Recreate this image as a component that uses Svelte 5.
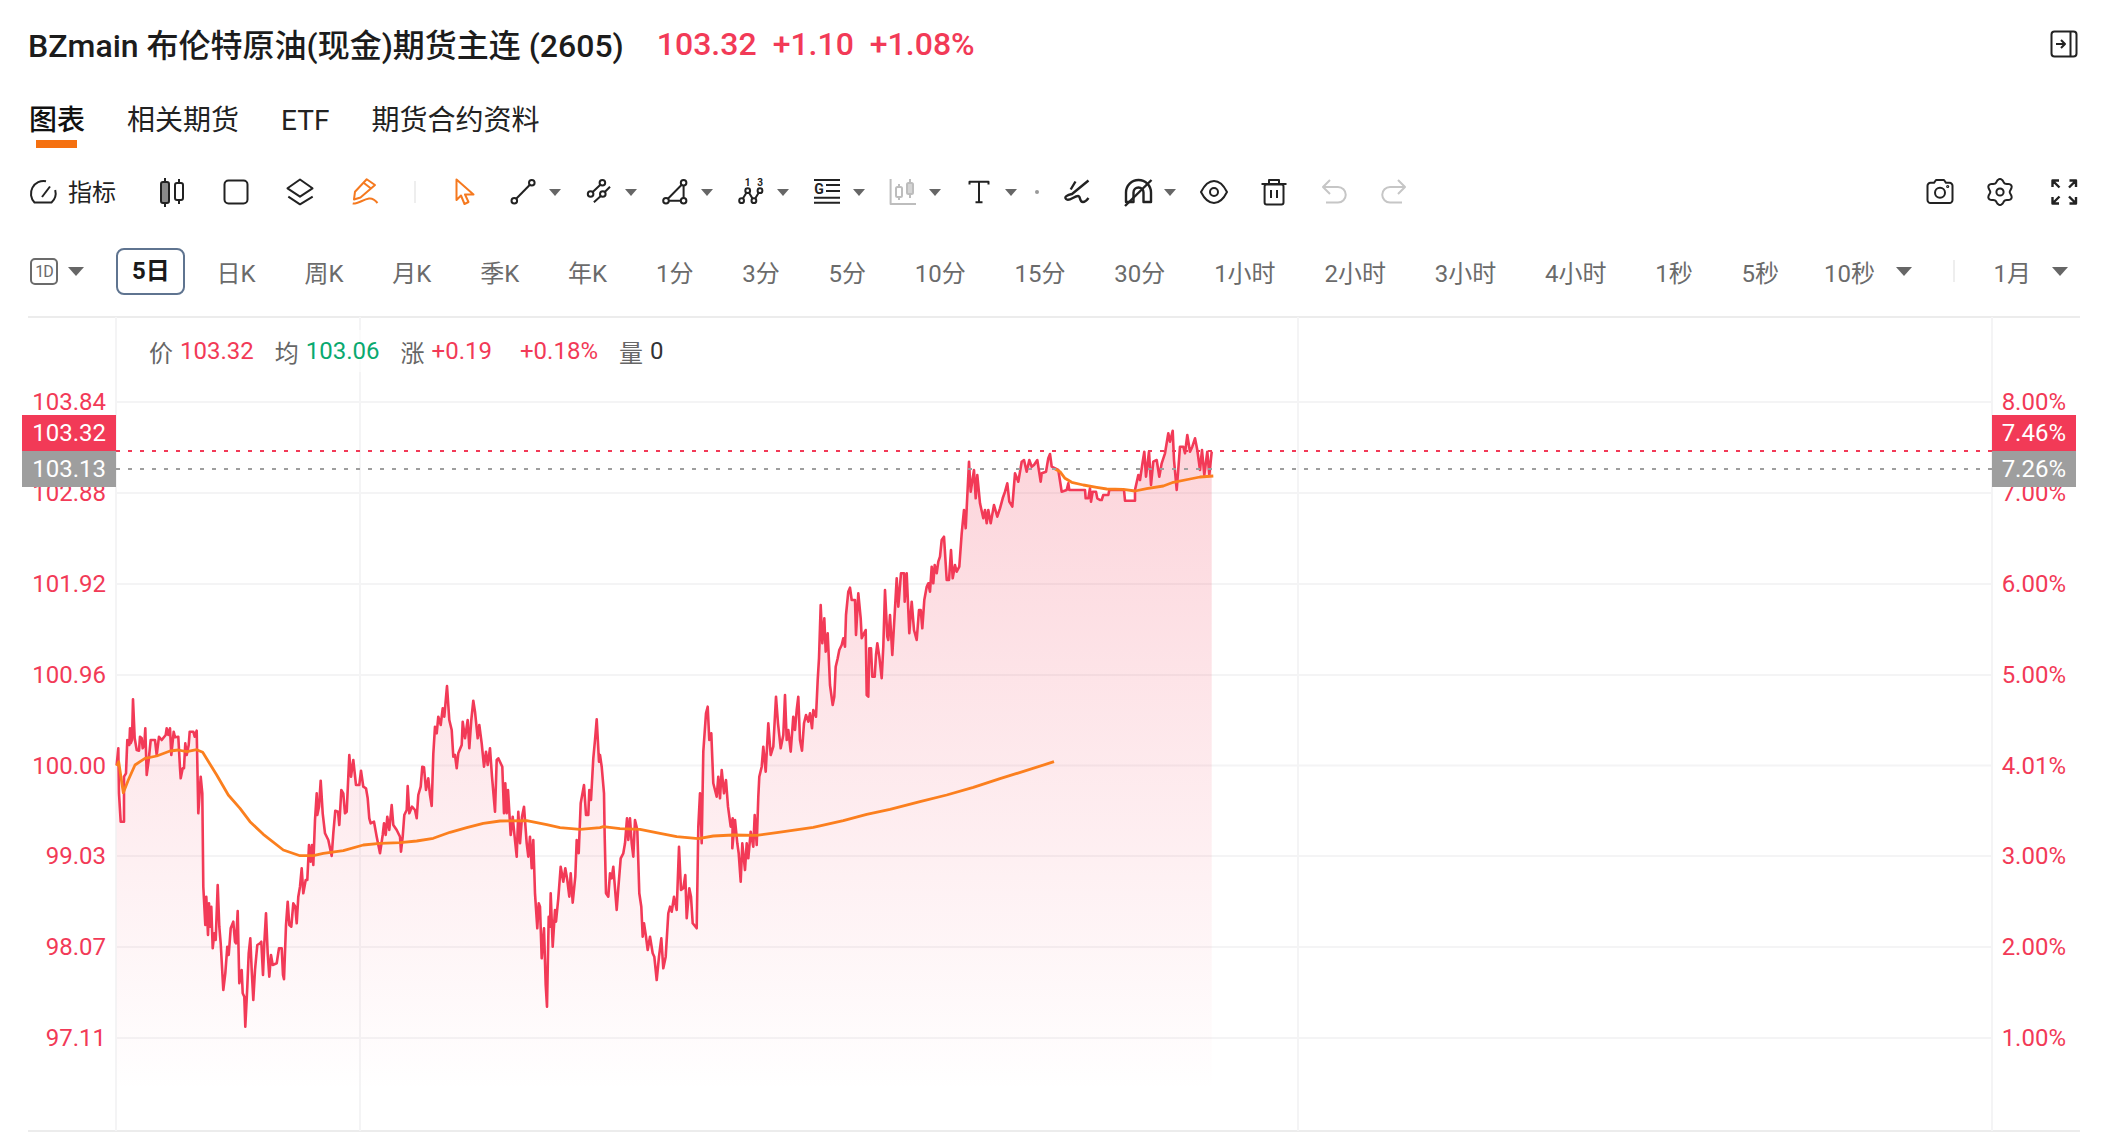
<script>
  // traced price points, grouped by the crop they were read from
  const seg1 = [[50,255],[55,205],[57,340],[62,425],[72,425],[72,290],[78,280],[82,180],[88,195],[90,145],[92,190],[96,180],[99,58],[104,175],[110,210],[117,212],[120,170],[125,175],[128,205],[133,195],[136,145],[140,285],[146,240],[152,180],[165,180],[170,225],[177,170],[185,180],[197,165],[200,145],[205,165],[210,145],[214,225],[221,155],[225,172],[235,170],[240,265],[242,295],[248,265],[252,265],[256,190],[260,225],[266,195],[269,155],[280,155],[284,170],[290,152],[295,400],[302,290],[307,340],[310,620],[316,735],[319,650],[324,765],[327,670],[330,740],[334,680],[338,805],[343,760],[347,780],[353,615],[358,740],[362,790],[370,930],[376,880],[382,800],[386,825],[392,745],[400,725],[405,785],[408,790],[413,693],[418,910],[425,870],[428,940],[433,950],[436,1040],[442,920],[446,820],[451,775],[455,870],[460,960],[465,870],[472,795],[480,790],[484,785],[489,885],[493,790],[498,700],[503,820],[508,890],[513,825],[518,855],[530,850],[537,805],[545,805],[549,885],[552,898],[558,735],[563,665],[568,735],[574,740],[580,670],[586,680],[590,730],[595,650],[600,620],[605,565],[610,640],[617,600],[622,600],[627,495],[632,545],[636,495],[640,555],[645,420],[650,340],[652,405],[657,380],[662,302],[668,400],[675,460],[685,480],[695,528],[700,460],[706,392],[714,395],[718,435],[724,330],[730,340],[735,400],[740,395],[748,225],[753,290],[760,240],[768,315],[778,315],[783,272],[790,320],[798,325],[803,355],[808,415],[812,430],[822,425],[830,470],[840,520],[848,465],[852,430],[857,465],[862,410],[868,450],[875,375],[880,435],[890,450],[900,470],[903,515],[908,470],[913,405],[920,390],[923,318],[928,400],[936,380],[945,390],[950,415],[955,345],[962,320],[967,260],[972,262],[978,330],[985,295],[990,345],[995,378],[1000,222],[1005,140],[1010,160],[1015,110],[1022,135],[1028,85],[1033,110],[1041,18],[1048,120],[1055,150],[1060,230],[1065,225],[1070,265],[1075,220],[1085,195],[1088,125],[1095,175],[1103,120],[1108,205],[1114,120],[1120,62],[1125,95],[1133,175],[1138,135],[1145,190],[1152,260],[1158,215],[1163,255],[1170,205],[1176,290],[1185,395],[1190,240],[1195,235],[1207,260],[1212,400],[1216,310],[1220,400],[1224,330],[1232,465],[1238,410],[1243,460],[1250,530],[1255,395],[1260,490],[1266,410],[1272,380],[1280,490],[1285,530],[1290,470],[1295,565],[1300,480],[1305,640],[1312,745],[1316,670],[1320,680],[1325,835],[1332,745],[1337,915],[1341,980],[1346,710],[1350,740],[1352,640],[1358,800],[1365,690],[1368,725],[1375,655],[1382,560],[1390,605],[1396,565],[1402,600],[1408,650],[1412,580],[1418,668],[1426,590],[1430,480],[1436,520],[1442,370],[1452,315],[1458,405],[1465,405],[1468,330],[1473,360],[1480,235],[1485,180],[1490,118],[1497,245]];
  const seg2 = [[300,225],[305,260],[312,340],[314,470],[318,640],[325,650],[330,580],[335,595],[340,560],[345,625],[350,690],[355,625],[362,535],[370,520],[375,490],[381,415],[385,480],[390,415],[395,490],[400,530],[405,420],[412,450],[418,640],[424,680],[428,770],[432,730],[438,770],[443,810],[450,770],[458,820],[463,830],[470,900],[477,830],[484,775],[490,865],[497,830],[505,700],[510,680],[515,695],[522,650],[530,690],[537,500],[543,630],[550,625],[556,585],[560,715],[568,625],[573,650],[578,730],[590,745],[595,440],[600,340],[605,490],[610,215],[618,100],[623,80],[628,180],[634,160],[640,310],[650,350],[655,290],[660,355],[665,270],[672,340],[678,300],[684,380],[692,440],[698,415],[697,505],[705,420],[712,490],[716,520],[722,605],[727,490],[735,570],[740,490],[745,535],[752,455],[760,500],[764,405],[770,495],[775,350],[778,290],[785,260],[790,200],[797,275],[805,130],[812,225],[820,200],[828,50],[834,130],[842,205],[850,165],[855,45],[860,180],[865,150],[872,215],[880,110],[885,150],[890,90],[895,50],[900,180],[906,212],[912,130],[918,105],[925,125],[930,100],[936,145],[940,90],[948,110]];
  const seg3 = [[53,720],[57,655],[62,495],[67,610],[73,535],[77,635],[83,580],[90,735],[98,795],[103,770],[107,680],[113,655],[118,630],[125,615],[130,595],[135,620],[138,525],[145,455],[150,443],[155,480],[165,480],[168,585],[175,460],[182,535],[185,595],[192,580],[197,570],[200,765],[205,770],[208,625],[213,625],[217,710],[224,710],[228,645],[232,610],[238,650],[245,715],[250,620],[255,450],[262,590],[265,600],[270,525],[277,645],[285,505],[290,415],[295,500],[303,400],[312,400],[314,485],[320,400],[328,580],[335,485],[342,570],[350,600],[357,510],[362,510],[367,565],[373,480],[380,440],[385,430],[390,455],[395,380],[400,430],[404,375],[410,400],[415,365],[420,350],[425,300],[432,290],[440,420],[447,420],[453,330],[458,415],[465,375],[470,395],[478,380],[485,280],[492,210],[497,265],[500,205],[507,65],[512,155],[522,90],[527,175],[532,105],[540,190],[550,235],[555,210],[560,250],[565,210],[572,250],[582,195],[592,230],[600,205],[608,175],[615,155],[622,130],[628,185],[637,200],[645,100],[655,125],[665,65],[672,60],[680,95],[688,60],[695,80],[702,75],[712,60],[722,125],[725,100],[738,95],[745,55],[750,42],[755,80],[775,90],[785,155],[800,150],[805,130],[808,150],[855,150],[857,175],[865,175],[870,145],[873,185],[878,155],[888,155],[892,175],[900,180],[905,180],[910,165],[925,165],[928,150],[972,150],[975,182],[1005,182]];
  const seg4 = [[555,240],[565,195],[570,210],[578,155],[583,125],[588,200],[597,125],[603,225],[610,155],[620,150],[628,200],[635,160],[645,130],[655,70],[660,95],[668,62],[672,150],[680,240],[690,110],[700,110],[705,130],[712,75],[720,125],[727,110],[735,85],[742,120],[750,180],[756,120],[763,195],[772,125],[778,195],[785,125]];

  const avg1 = [[50,258],[56,245],[70,338],[85,300],[105,255],[135,235],[170,228],[210,213],[235,210],[260,215],[290,209],[308,217],[350,285],[385,345],[420,385],[450,425],[490,463],[550,510],[600,527],[640,527],[670,520],[730,512],[790,495],[840,490],[900,488],[950,483],[1000,475],[1050,457],[1100,443],[1150,430],[1200,423],[1280,422],[1340,434],[1380,443],[1440,448],[1500,443]];
  const avg2 = [[310,440],[360,446],[420,448],[480,460],[530,470],[595,476],[640,468],[700,465],[770,466],[830,458],[940,442],[1030,422],[1100,403],[1170,388],[1260,365],[1340,345],[1420,322],[1500,296],[1662,245]];
  const avg3 = [[315,177],[330,185],[345,205],[365,217],[400,225],[440,232],[470,237],[520,238],[555,243],[590,236],[640,228],[670,217],[720,207],[750,201],[790,198]];

  const map = (pts, ox, oy) => pts.map(([x, y]) => [ox + x / 3, oy + y / 3]);
  const toD = (pts) => pts.map(([x, y], i) => (i ? "L" : "M") + x.toFixed(1) + " " + y.toFixed(1)).join("");

  const pricePts = [...map(seg1, 100, 680), ...map(seg2, 500, 680), ...map(seg3, 800, 440), ...map(seg4, 950, 410)];
  const priceLine = toD(pricePts);
  const priceArea = priceLine + "L" + pricePts[pricePts.length - 1][0].toFixed(1) + " 1092L116.7 1092Z";
  const avgA = toD([...map(avg1, 100, 680), ...map(avg2, 500, 680)]);
  const avgB = toD(map(avg3, 950, 410));

  const gridY = [402, 493, 584, 675, 765.5, 856, 947, 1038];
  const gridX = [116, 360, 1298, 1992];
  const leftLabels = ["103.84", "102.88", "101.92", "100.96", "100.00", "99.03", "98.07", "97.11"];
  const rightLabels = ["8.00%", "7.00%", "6.00%", "5.00%", "4.01%", "3.00%", "2.00%", "1.00%"];

  const periods = ["日K", "周K", "月K", "季K", "年K", "1分", "3分", "5分", "10分", "15分", "30分", "1小时", "2小时", "3小时", "4小时", "1秒", "5秒"];

  let gear = "";
  for (let i = 0; i <= 72; i++) {
    const t = (i / 72) * Math.PI * 2;
    const r = 11.4 + 1.7 * Math.cos(6 * t);
    gear += (i ? "L" : "M") + (14 + r * Math.sin(t)).toFixed(2) + " " + (14 - r * Math.cos(t)).toFixed(2);
  }
  gear += "Z";
</script>

<div class="page">
  <header class="head">
    <h1>BZmain 布伦特原油(现金)期货主连 (2605)</h1>
    <div class="quote">
      <span>103.32</span>
      <span>+1.10</span>
      <span>+1.08%</span>
    </div>
    <svg class="ico push" viewBox="0 0 28 28">
      <rect x="1.5" y="1.5" width="25" height="25" rx="3" />
      <path d="M20.5 2V26M6 14H15M11 10L15 14L11 18" />
    </svg>
  </header>

  <nav class="tabs">
    <span class="tab active">图表</span>
    <span class="tab">相关期货</span>
    <span class="tab">ETF</span>
    <span class="tab">期货合约资料</span>
  </nav>

  <div class="toolbar">
    <div class="indicator">
      <svg class="ico" viewBox="0 0 28 28">
        <path d="M17 3.2A12.7 12.7 0 0 0 5.5 24.5H22.5A12.7 12.7 0 0 0 26.2 12" />
        <path d="M13 19L21 8.5" />
      </svg>
      <span>指标</span>
    </div>

    <div class="left-tools">
      <svg class="ico" viewBox="0 0 28 28">
        <path d="M7 0V4M7 25V29M21 1V5M21 22V26" />
        <rect x="3" y="4" width="8" height="21" rx="2" class="dim" />
        <rect x="17" y="5" width="8" height="17" rx="2" />
      </svg>
      <svg class="ico" viewBox="0 0 28 28"><rect x="2.5" y="2.5" width="23" height="23" rx="4" /></svg>
      <svg class="ico" viewBox="0 0 28 28">
        <path d="M14 1.5L26.5 10.3L14 18.7L1.5 10.3Z" />
        <path d="M2.3 18.7L14 26.3L26.7 18.7" />
      </svg>
      <svg class="ico orange" viewBox="0 0 28 28">
        <path d="M16.7 1.3L25 7L10.5 19.5L4 21.5L5 13.7Z" />
        <path d="M13.3 4.5L21 10.5" />
        <path d="M2.7 25.5C7 26.5 13 21.5 19 20.5C22 20 25 22 27.5 25" />
      </svg>
      <span class="sep"></span>
    </div>

    <svg class="ico orange cursor" viewBox="0 0 28 28">
      <path d="M5.5 1.5V22L10 17.5L13.5 26L17.5 24L14 16.5H22.5Z" />
    </svg>

    <div class="draw-tools">
      <div class="tool">
        <svg class="ico" viewBox="0 0 28 28">
          <circle cx="5.3" cy="22.7" r="2.8" /><circle cx="22.8" cy="4.7" r="2.8" />
          <path d="M7.2 20.7L20.9 6.7" />
        </svg>
        <i class="caret"></i>
      </div>
      <div class="tool">
        <svg class="ico" viewBox="0 0 28 28">
          <circle cx="17.4" cy="4.7" r="2.8" /><circle cx="5.6" cy="16" r="2.8" /><circle cx="17.8" cy="16" r="2.8" />
          <path d="M7.7 14L15.4 6.7M8.9 24.3L15.8 18M19.8 14L25 8.7" />
        </svg>
        <i class="caret"></i>
      </div>
      <div class="tool">
        <svg class="ico" viewBox="0 0 28 28">
          <circle cx="22.6" cy="4.7" r="2.8" /><circle cx="5" cy="22.7" r="2.8" /><circle cx="22.6" cy="22.7" r="2.8" />
          <path d="M20.7 6.7L6.9 20.7M7.8 22.7H19.8M22.6 7.5V19.9" />
        </svg>
        <i class="caret"></i>
      </div>
      <div class="tool">
        <svg class="ico" viewBox="0 0 28 28">
          <text x="10.7" y="8" class="tiny">1</text>
          <text x="23" y="8" class="tiny">3</text>
          <circle cx="4.6" cy="22.7" r="2.4" /><circle cx="10.7" cy="12.7" r="2.4" /><circle cx="16.9" cy="22.7" r="2.4" /><circle cx="23" cy="12.7" r="2.4" />
          <path d="M5.9 20.6L9.4 14.8M12 14.8L15.6 20.6M18.2 20.6L21.7 14.8" />
        </svg>
        <i class="caret"></i>
      </div>
      <div class="tool">
        <svg class="ico" viewBox="0 0 28 28">
          <path d="M1 2H27M13 7H27M13 13H27M1 19.7H27M1 24.7H27" />
          <text x="6" y="15.5" class="glyph">G</text>
        </svg>
        <i class="caret"></i>
      </div>
      <div class="tool">
        <svg class="ico muted" viewBox="0 0 28 28">
          <path d="M1.6 1V26H27" />
          <path d="M10 6V22M21 1V20" />
          <rect x="7" y="9" width="6" height="10" rx="1.5" class="bg" />
          <rect x="18" y="5" width="6" height="11" rx="1.5" class="soft" />
        </svg>
        <i class="caret"></i>
      </div>
      <div class="tool">
        <svg class="ico" viewBox="0 0 28 28">
          <path d="M4.5 6.5V3.7H23.5V6.5M14 3.7V24.3M10.5 24.3H17.5" />
        </svg>
        <i class="caret"></i>
        <i class="dot"></i>
      </div>
      <svg class="ico thick" viewBox="0 0 28 28">
        <path d="M12.5 3.5L7.7 11.5M25.5 2.5L9 16C4 17 1 19 3 21C6 24 11 18 15 18C18 18 16 24 20 24C22 24 24 22 25.5 20" />
      </svg>
      <div class="tool hide-tool">
        <svg class="ico thick" viewBox="0 0 28 28">
          <path d="M2 24V14.500A12.500 12.500 0 0 1 27 14.500V24H19.500V14.500A5 5 0 0 0 9.500 14.500V24Z" />
          <path d="M1 28L27.500 2" />
        </svg>
        <i class="caret"></i>
      </div>
    </div>

    <div class="view-tools">
      <svg class="ico" viewBox="0 0 28 28">
        <path d="M1 14C5 6 9 3 14 3C19 3 23 6 27 14C23 22 19 25 14 25C9 25 5 22 1 14Z" />
        <circle cx="14" cy="14" r="4" />
      </svg>
      <svg class="ico" viewBox="0 0 28 28">
        <path d="M1.5 6H26.5M9 6V2H19V6" />
        <rect x="4.6" y="6.5" width="18.9" height="20" rx="2" />
        <path d="M11 12V20M17 12V20" />
      </svg>
      <svg class="ico faint" viewBox="0 0 28 28">
        <path d="M10 2L3 9L10 16M3 9H18A7.7 7.7 0 0 1 18 24.5H6" />
      </svg>
      <svg class="ico faint" viewBox="0 0 28 28">
        <path d="M18 2L25 9L18 16M25 9H10A7.7 7.7 0 0 0 10 24.5H22" />
      </svg>
    </div>

    <div class="right-tools">
      <svg class="ico" viewBox="0 0 28 28">
        <path d="M8 4.800L10 2H18L20 4.800H23.500A3 3 0 0 1 26.500 7.800V22A3 3 0 0 1 23.500 25H4.500A3 3 0 0 1 1.500 22V7.800A3 3 0 0 1 4.500 4.800Z" />
        <circle cx="14" cy="14.700" r="5" />
        <circle cx="21.700" cy="8.500" r="0.600" />
      </svg>
      <svg class="ico" viewBox="0 0 28 28">
        <path d={gear} />
        <circle cx="14" cy="14" r="3.600" />
      </svg>
      <svg class="ico expand thick" viewBox="0 0 28 28">
        <path d="M2.500 9V2.500H9M2.500 2.500L9.500 9.500M19.500 2.500H26V9M26 2.500L19 9.500M2.500 19V25.500H9M2.500 25.500L9.500 18.500M26 19V25.500H19.500M26 25.500L19 18.500" />
      </svg>
    </div>
  </div>

  <div class="periods">
    <div class="interval">
      <span class="oneD">1D</span>
      <i class="caret big"></i>
    </div>
    <span class="period selected">5日</span>
    {#each periods as p}
      <span class="period">{p}</span>
    {/each}
    <span class="period with-caret ten">10秒 <i class="caret big"></i></span>
    <span class="vsep"></span>
    <span class="period with-caret month">1月 <i class="caret big"></i></span>
  </div>

  <div class="chart">
    <div class="legend">
      <span class="k">价</span><span class="v up">103.32</span>
      <span class="k">均</span><span class="v green">103.06</span>
      <span class="k">涨</span><span class="v up">+0.19</span>
      <span class="v up pct">+0.18%</span>
      <span class="k">量</span><span class="v">0</span>
    </div>

    <svg class="plot" viewBox="28 316 2052 818" width="2052" height="818">
      <defs>
        <linearGradient id="fade" gradientUnits="userSpaceOnUse" x1="0" y1="430" x2="0" y2="1092">
          <stop offset="0" stop-color="#f23a57" stop-opacity="0.22" />
          <stop offset="1" stop-color="#f23a57" stop-opacity="0" />
        </linearGradient>
      </defs>

      <path d="M28 317H2080M28 1131H2080" class="frame" />
      {#each gridY as y}
        <path d="M116 {y}H1992" class="grid" />
      {/each}
      {#each gridX as x}
        <path d="M{x} 317V1131" class="grid" />
      {/each}

      <path d={priceArea} fill="url(#fade)" />
      <path d={priceLine} class="price" />
      <path d={avgA} class="avg" />
      <path d={avgB} class="avg" />

      <path d="M116 451H1992" class="dash red" />
      <path d="M116 469H1992" class="dash gray" />

      {#each leftLabels as t, i}
        <text x="106" y={gridY[i]} class="axis">{t}</text>
      {/each}
      {#each rightLabels as t, i}
        <text x="2066" y={gridY[i]} class="axis">{t}</text>
      {/each}

      <rect x="22" y="415" width="94" height="36" class="box-red" />
      <rect x="22" y="451" width="94" height="36" class="box-gray" />
      <rect x="1992" y="415" width="84" height="36" class="box-red" />
      <rect x="1992" y="451" width="84" height="36" class="box-gray" />
      <text x="106" y="433" class="tag">103.32</text>
      <text x="106" y="469" class="tag">103.13</text>
      <text x="2066" y="433" class="tag">7.46%</text>
      <text x="2066" y="469" class="tag">7.26%</text>
    </svg>
  </div>
</div>

<style>
  :global(body) {
    margin: 0;
    background: #fff;
    overflow: hidden;
  }

  .page {
    width: 2108px;
    height: 1134px;
    box-sizing: border-box;
    padding: 0 28px;
    font-family: Roboto, "Noto Sans CJK SC", sans-serif;
    color: #222;
  }

  .ico {
    width: 28px;
    height: 28px;
    flex: none;
    overflow: visible;
    fill: none;
    stroke: #222;
    stroke-width: 2;
    stroke-linejoin: round;
  }
  .ico.thick {
    stroke-width: 2.4;
  }
  .ico.orange {
    stroke: #f5791f;
  }
  .ico.muted {
    stroke: #bdbdbd;
  }
  .ico.faint {
    stroke: #c6c6c6;
  }
  .ico .dim {
    fill: #8a8a8a;
  }
  .ico .bg {
    fill: #fff;
  }
  .ico .soft {
    fill: #d4d4d4;
  }
  .ico text {
    font-family: Roboto, sans-serif;
    fill: #222;
    stroke: none;
    text-anchor: middle;
  }
  .ico .tiny {
    font-size: 10px;
    font-weight: 700;
  }
  .ico .glyph {
    font-size: 14px;
    font-weight: 700;
  }

  .head {
    height: 88px;
    display: flex;
    align-items: center;
    padding: 0 2px 0 0;
  }
  .head h1 {
    margin: -2px 0 0;
    font-size: 32px;
    font-weight: 500;
    color: #1c1c1c;
    white-space: nowrap;
  }
  .quote {
    display: flex;
    gap: 16px;
    margin-left: 33px;
    font-size: 32px;
    font-weight: 500;
    color: #f23a57;
  }
  .push {
    margin-left: auto;
  }

  .tabs {
    height: 62px;
    display: flex;
    gap: 42px;
    padding-top: 3px;
    padding-left: 1px;
    box-sizing: border-box;
    font-size: 28px;
    line-height: 60px;
  }
  .tab {
    position: relative;
  }
  .tab.active {
    font-weight: 500;
    color: #111;
  }
  .tab.active::after {
    content: "";
    position: absolute;
    left: 7px;
    right: 8px;
    top: 49px;
    height: 8px;
    background: #f5700f;
  }

  .toolbar {
    height: 84px;
    display: flex;
    align-items: center;
    padding: 0 2px;
  }
  .indicator {
    display: flex;
    align-items: center;
    gap: 11px;
    font-size: 24px;
    margin-left: -1px;
    line-height: 26px;
  }
  .indicator span {
    margin-top: 2px;
  }
  .left-tools {
    display: flex;
    align-items: center;
    gap: 36px;
    margin-left: 42px;
  }
  .sep {
    width: 2px;
    height: 22px;
    background: #eee;
  }
  .cursor {
    margin-left: 35px;
  }
  .draw-tools {
    display: flex;
    align-items: center;
    gap: 24px;
    margin-left: 30px;
  }
  .tool {
    display: flex;
    align-items: center;
    gap: 12px;
  }
  .hide-tool {
    margin-left: 9px;
  }
  .caret {
    width: 0;
    height: 0;
    border-left: 6px solid transparent;
    border-right: 6px solid transparent;
    border-top: 7px solid #666;
  }
  .caret.big {
    border-left-width: 8px;
    border-right-width: 8px;
    border-top-width: 9px;
  }
  .dot {
    width: 4px;
    height: 4px;
    border-radius: 50%;
    background: #999;
    margin-left: 6px;
  }
  .view-tools {
    display: flex;
    align-items: center;
    gap: 32px;
    margin-left: 24px;
  }
  .right-tools {
    display: flex;
    align-items: center;
    gap: 32px;
    margin-left: auto;
  }
  .expand {
    margin-left: 4px;
  }

  .periods {
    height: 74px;
    margin-bottom: 8px;
    display: flex;
    align-items: center;
    gap: 18.8px;
    padding: 0 2px;
    font-size: 24px;
    color: #6b6b6b;
  }
  .interval {
    display: flex;
    align-items: center;
    gap: 10px;
    margin-right: 13px;
  }
  .oneD {
    box-sizing: border-box;
    width: 28px;
    height: 27px;
    border: 2px solid #6b6b6b;
    border-radius: 5px;
    font-size: 16px;
    line-height: 23px;
    text-align: center;
    letter-spacing: -1px;
  }
  .period {
    flex: none;
    padding: 0 15px;
    white-space: nowrap;
  }
  .period.selected {
    box-sizing: border-box;
    width: 69px;
    height: 47px;
    margin-right: -2px;
    padding: 0 0 0 1px;
    line-height: 43px;
    text-align: center;
    border: 2px solid #5f7490;
    border-radius: 8px;
    font-weight: 700;
    color: #1a1a1a;
  }
  .with-caret {
    display: flex;
    align-items: center;
    gap: 21px;
  }
  .ten {
    margin-left: -4px;
    margin-right: 7px;
  }
  .month {
    margin-left: 5px;
    padding-right: 0;
  }
  .vsep {
    width: 2px;
    height: 22px;
    background: #eee;
  }

  .chart {
    position: relative;
  }
  .legend {
    position: absolute;
    left: 121px;
    top: 14px;
    height: 42px;
    display: flex;
    align-items: center;
    font-size: 24px;
    background: rgba(255, 255, 255, 0.6);
  }
  .k {
    color: #666;
    margin-right: 7px;
  }
  .v {
    margin-right: 21px;
    color: #333;
  }
  .up {
    color: #f23a57;
  }
  .green {
    color: #0aa96f;
  }
  .pct {
    margin-left: 7px;
  }

  .plot {
    display: block;
    overflow: visible;
  }
  .frame {
    stroke: #ececec;
    stroke-width: 2;
    fill: none;
  }
  .grid {
    stroke: #f4f4f5;
    stroke-width: 2;
    fill: none;
  }
  .price {
    fill: none;
    stroke: #f23a57;
    stroke-width: 2.6;
    stroke-linejoin: round;
  }
  .avg {
    fill: none;
    stroke: #fb7f1e;
    stroke-width: 2.8;
    stroke-linejoin: round;
  }
  .dash {
    stroke-width: 2;
    stroke-dasharray: 4 8;
    fill: none;
  }
  .dash.red {
    stroke: #f23a57;
  }
  .dash.gray {
    stroke: #9e9e9e;
  }
  .axis,
  .tag {
    font-family: Roboto, sans-serif;
    font-size: 24px;
    text-anchor: end;
    dominant-baseline: central;
  }
  .axis {
    fill: #f23a57;
  }
  .tag {
    fill: #fff;
  }
  .box-red {
    fill: #f23a57;
  }
  .box-gray {
    fill: #9e9e9e;
  }
</style>
